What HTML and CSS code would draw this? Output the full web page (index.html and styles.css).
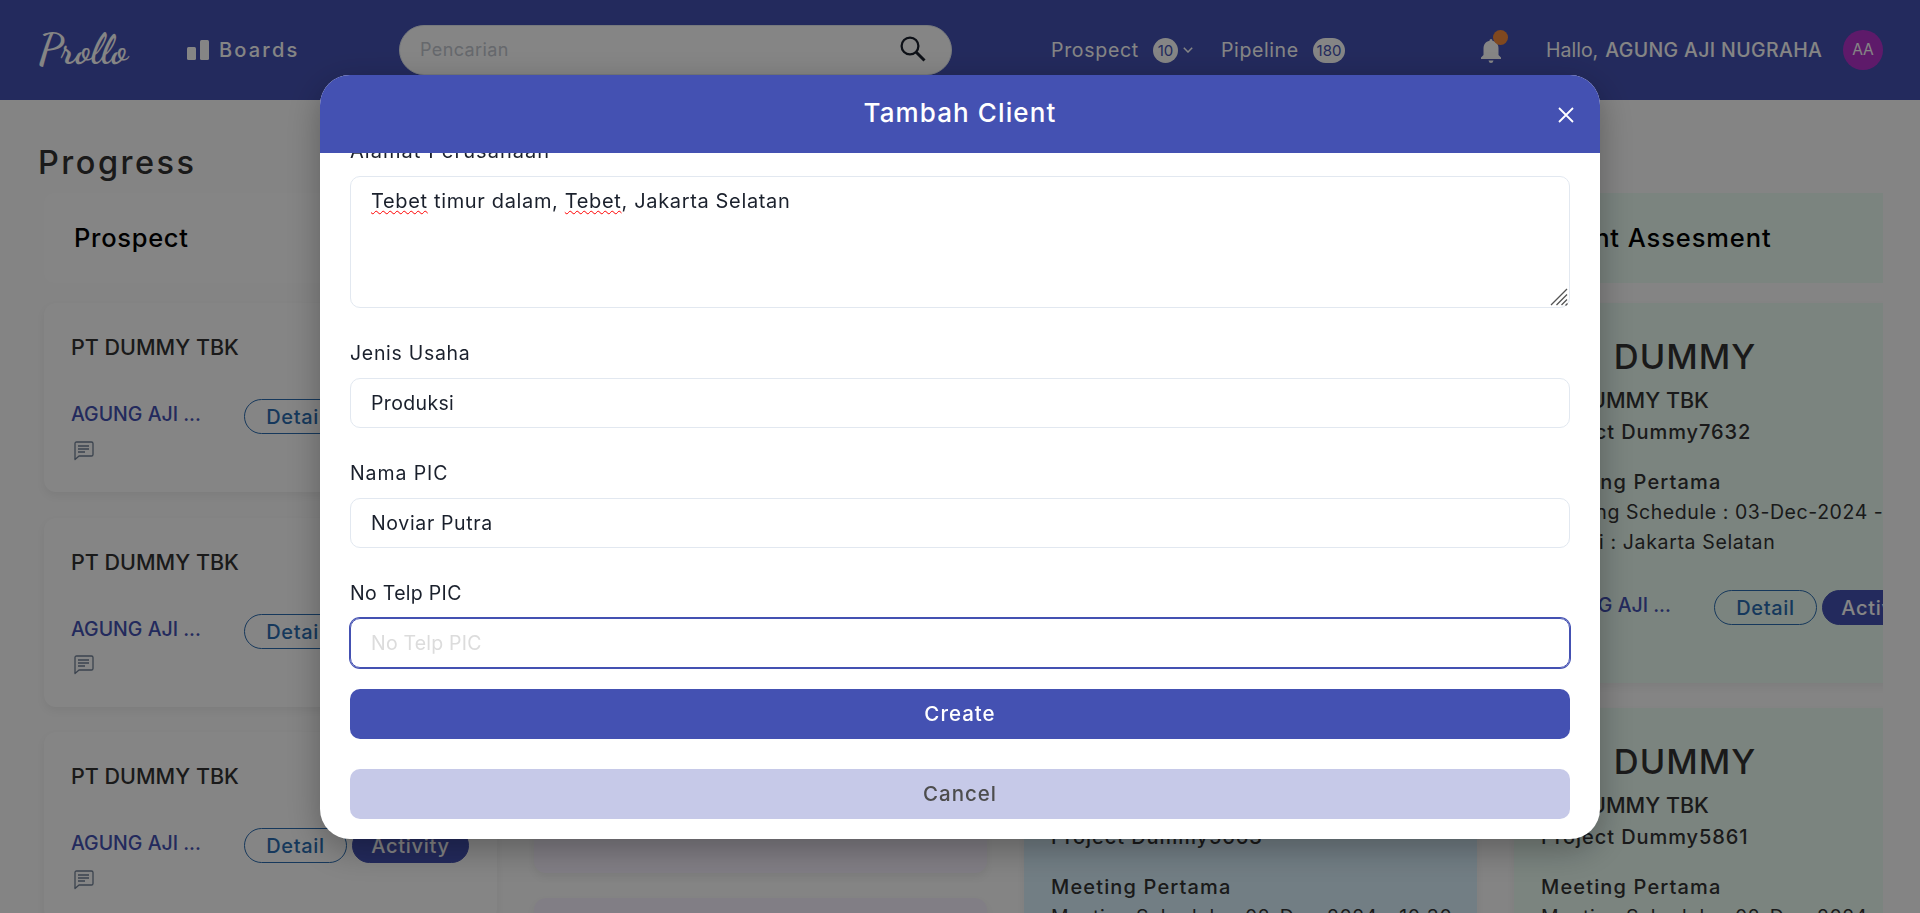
FILE: index.html
```html
<!DOCTYPE html>
<html lang="id">
<head>
<meta charset="utf-8">
<title>Prollo</title>
<link rel="stylesheet" href="styles.css">
</head>
<body>
<svg class="defs" aria-hidden="true">
  <symbol id="note" viewBox="0 0 20 20"><path d="M1 18.500V2.600Q1 1 2.600 1H17.400Q19 1 19 2.600V13.400Q19 15 17.400 15H5Z M4 5H15 M4 8H15 M4 11H11" fill="none" stroke="currentColor" stroke-width="1.300" stroke-linejoin="round"/></symbol>
</svg>
<div class="page">
  <header class="topbar">
    <div class="logo"><span>Prollo</span></div>
    <div class="boards">
      <svg width="22" height="20" viewBox="0 0 22 20"><rect y="7" width="9" height="13" rx="1.500" fill="#fff"/><rect x="13" width="9" height="20" rx="1.500" fill="#fff"/></svg>
      <span>Boards</span>
    </div>
    <div class="search"><span>Pencarian</span>
      <svg width="26" height="26" viewBox="0 0 26 26" fill="none" stroke="#1a202c" stroke-width="2.300"><circle cx="10" cy="10" r="8.400"/><path d="M16 16L24.500 24.500" stroke-width="3"/></svg>
    </div>
    <nav class="nav">
      <span class="nav-prospect">Prospect</span><b class="count ten">10</b>
      <svg class="chev" width="10" height="6" viewBox="0 0 10 6"><path d="M.8.8L5 5L9.200.8" fill="none" stroke="#fff" stroke-width="1.500"/></svg>
      <span class="nav-pipeline">Pipeline</span><b class="count">180</b>
    </nav>
    <div class="bell">
      <svg width="20" height="24" viewBox="0 0 20 24"><path d="M10 0Q11.500 0 11.500 1.800C15.500 2.600 17.500 5.500 17.500 9.500V16L20 18.600V20H0V18.600L2.500 16V9.500C2.500 5.500 4.500 2.600 8.500 1.800Q8.500 0 10 0ZM7.500 21.500H12.500Q12 24 10 24Q8 24 7.500 21.500Z" fill="#fff"/></svg>
      <i class="dot"></i>
    </div>
    <div class="hello"><span class="hi">Hallo,</span><span class="user">AGUNG AJI NUGRAHA</span></div>
    <div class="avatar">AA</div>
  </header>
  <h1 class="title"><span>Progress</span></h1>
  <main class="board">
    <section class="col">
      <h2 class="col-head">Prospect</h2>
      <article class="card">
        <h3 class="company">PT DUMMY TBK</h3>
        <div class="foot"><span class="owner">AGUNG AJI ...</span><span class="pill">Detail</span><span class="pill solid">Activity</span></div>
        <svg class="note"><use href="#note"/></svg>
      </article>
      <article class="card">
        <h3 class="company">PT DUMMY TBK</h3>
        <div class="foot"><span class="owner">AGUNG AJI ...</span><span class="pill">Detail</span><span class="pill solid">Activity</span></div>
        <svg class="note"><use href="#note"/></svg>
      </article>
      <article class="card">
        <h3 class="company">PT DUMMY TBK</h3>
        <div class="foot"><span class="owner">AGUNG AJI ...</span><span class="pill">Detail</span><span class="pill solid">Activity</span></div>
        <svg class="note"><use href="#note"/></svg>
      </article>
    </section>
    <section class="col purple">
      <h2 class="col-head"></h2>
      <article class="card first"></article>
      <article class="card"></article>
    </section>
    <section class="col blue">
      <h2 class="col-head"></h2>
      <article class="card long"></article>
      <article class="card tall">
        <h2 class="big">PT DUMMY</h2>
        <h3 class="company">PT DUMMY TBK</h3>
        <p class="project">Project Dummy5663</p>
        <p class="meeting">Meeting Pertama</p>
        <p class="line">Meeting Schedule : 02-Dec-2024 - 10:30</p>
      </article>
    </section>
    <section class="col green">
      <h2 class="col-head">Client Assesment</h2>
      <article class="card tall">
        <h2 class="big">PT DUMMY</h2>
        <h3 class="company">PT DUMMY TBK</h3>
        <p class="project">Project Dummy7632</p>
        <p class="meeting">Meeting Pertama</p>
        <p class="line">Meeting Schedule : 03-Dec-2024 - 10:30</p>
        <p class="line place">Lokasi : Jakarta Selatan</p>
        <div class="foot"><span class="owner">AGUNG AJI ...</span><span class="pill">Detail</span><span class="pill solid">Activity</span></div>
      </article>
      <article class="card tall">
        <h2 class="big">PT DUMMY</h2>
        <h3 class="company">PT DUMMY TBK</h3>
        <p class="project">Project Dummy5861</p>
        <p class="meeting">Meeting Pertama</p>
        <p class="line">Meeting Schedule : 02-Dec-2024 - 10:30</p>
      </article>
    </section>
  </main>
</div>
<div class="overlay">
  <div class="modal" role="dialog">
    <div class="modal-head"><span>Tambah Client</span>
      <svg class="close" width="16" height="16" viewBox="0 0 16 16"><path d="M1 1L15 15M15 1L1 15" stroke="#fff" stroke-width="1.800"/></svg>
    </div>
    <div class="modal-body">
      <label class="l1">Alamat Perusahaan</label>
      <div class="input area"><span class="v1"><u>Tebet</u> timur dalam, <u>Tebet</u>, Jakarta Selatan</span>
        <svg class="grip" width="18" height="18" viewBox="0 0 18 18"><path d="M1 17L17 1M6.500 17L17 6.500M11.500 17L17 11.500M15.500 17.500L17.500 15.500" stroke="#555" stroke-width="1.300"/></svg>
      </div>
      <label class="l2">Jenis Usaha</label>
      <div class="input"><span class="v2">Produksi</span></div>
      <label class="l3">Nama PIC</label>
      <div class="input"><span class="v3">Noviar Putra</span></div>
      <label class="l4">No Telp PIC</label>
      <div class="input focus"><span class="v4">No Telp PIC</span></div>
      <div class="btn create"><span>Create</span></div>
      <div class="btn cancel"><span>Cancel</span></div>
    </div>
  </div>
</div>
</body>
</html>
```
FILE: styles.css
```css
* { box-sizing: border-box; margin: 0; padding: 0; }
body { height: 913px; overflow: hidden; font-family: Inter, "Open Sans", sans-serif; font-size: 19.5px; line-height: 30px; color: #333; background: #fff; white-space: nowrap; }
h1, h2, h3 { font-weight: 500; }
.defs { display: block; width: 0; height: 0; }
.page { height: 913px; overflow: hidden; background: #fdfdfd; }

.topbar { display: flex; align-items: center; height: 100px; padding-left: 38px; background: #4451b2; color: #fff; }
.logo { width: 149px; font-family: "Dancing Script", "Liberation Serif", serif; font-weight: 700; font-size: 42px; }
.boards { display: flex; align-items: center; gap: 10px; width: 212px; font-weight: 500; font-size: 20px; letter-spacing: 2.2px; }
.search { display: flex; align-items: center; justify-content: space-between; width: 553px; height: 50px; padding: 0 25px 0 20px; border-radius: 25px; background: #fff; border: 1px solid #e2e8f0; color: #c3c8d0; font-size: 18px; letter-spacing: .4px; }
.search svg { margin-top: -2px; }
.nav { display: flex; align-items: center; width: 529px; padding-left: 99px; }
.nav-prospect { width: 102px; letter-spacing: .7px; }
.nav-pipeline { width: 92px; letter-spacing: .6px; }
.chev { margin: 0 28px 0 5px; }
.count { height: 25px; line-height: 25px; border-radius: 13px; background: #fff; color: #4451b2; font-size: 15px; font-weight: 400; width: 32px; text-align: center; }
.count.ten { width: 25px; }
.bell { position: relative; width: 65px; height: 24px; margin-top: 2px; }
.bell svg { display: block; }
.dot { position: absolute; left: 12px; top: -9px; width: 15px; height: 15px; border-radius: 50%; background: #f68b3c; }
.hello { display: flex; width: 297px; gap: 7px; }
.user { font-weight: 500; letter-spacing: .37px; }
.avatar { width: 40px; height: 40px; border-radius: 50%; background: #b532cc; font-size: 15.5px; line-height: 40px; text-align: center; }

.title { height: 93px; padding: 42px 0 0 38px; font-size: 32.5px; line-height: 42px; letter-spacing: 2.5px; color: #333; font-weight: 500; }
.board { display: flex; gap: 37.5px; width: 1845px; height: 720px; margin-left: 38px; padding-left: 6px; overflow: hidden; }
.col { flex: none; width: 452.5px; }
.col-head { height: 90px; margin-bottom: 20px; padding: 0 30px; border-radius: 10px; background: #fff; color: #000; font-size: 25.5px; line-height: 89px; letter-spacing: .7px; }
.green .col-head { letter-spacing: .9px; }
.card { height: 189px; margin-bottom: 25.500px; padding: 28px 27px 0; border-radius: 12px; background: #fff; box-shadow: 0 4px 8px rgba(0,0,0,.06); }
.card .company { height: 61px; padding-top: 1px; font-size: 21.5px; }
.foot { display: flex; align-items: center; margin-top: 7px; }
.owner { flex: none; width: 173px; color: #4451b2; font-weight: 500; margin-top: -5px; }
.pill { width: 103px; height: 35px; margin-right: 5px; border: 1px solid #2b6cb0; border-radius: 18px; color: #2b6cb0; font-weight: 500; font-size: 20px; line-height: 34px; letter-spacing: .7px; text-align: center; flex: none; }
.pill.solid { width: 117px; background: #4451b2; border-color: #4451b2; color: #fff; }
.note { display: block; width: 20px; height: 20px; margin: 6.500px 0 0 3px; color: #718096; }
.purple .col-head, .purple .card { background: #f8f2ff; }
.purple .first { height: 570px; margin-bottom: 25px; }
.blue .col-head, .blue .card { background: #dbf2fe; }
.green .col-head, .green .card { background: #ebfdf4; }
.card.tall { height: 380px; margin-bottom: 24.500px; border-radius: 10px; padding-top: 29px; }
.card.long { height: 380px; margin-bottom: 24.500px; }
.big { font-size: 34.5px; line-height: 50px; letter-spacing: 1px; word-spacing: 16px; }
.tall .company { height: 32px; padding-top: 3px; }
.project { font-weight: 500; font-size: 20px; margin-top: 3px; letter-spacing: .93px; }
.meeting { font-weight: 500; font-size: 20px; margin-top: 20px; letter-spacing: 1.15px; }
.line { letter-spacing: .57px; }
.tall .place { letter-spacing: .65px; }
.tall .foot { margin-top: 33px; }

.overlay { position: fixed; inset: 0; display: flex; align-items: flex-start; justify-content: center; padding-top: 75px; background: rgba(0,0,0,.48); }
.modal { width: 1280px; height: 764px; border-radius: 30px; overflow: hidden; background: #fff; color: #1a202c; box-shadow: 0 10px 35px rgba(0,0,0,.3); }
.modal-head { position: relative; height: 78px; background: #4451b2; color: #fff; font-size: 26px; font-weight: 500; line-height: 76px; letter-spacing: 1.1px; text-align: center; }
.close { position: absolute; right: 26px; top: 31.500px; }
.modal-body { display: flex; flex-direction: column; height: 686px; padding: 0 30px; overflow: hidden; }
.modal-body label { flex: none; height: 30px; margin-bottom: 10px; }
.modal-body .l1 { margin-top: -17px; font-size: 20px; letter-spacing: 1.05px; }
.l2 { letter-spacing: .7px; }
.l3 { letter-spacing: .9px; }
.l4 { letter-spacing: .3px; }
.input { display: flex; align-items: center; height: 50px; padding: 0 20px; margin-bottom: 30px; border: 1px solid #e2e8f0; border-radius: 10px; flex: none; }
.input.area { position: relative; align-items: flex-start; height: 132px; padding-top: 9px; }
.v1 { font-size: 20px; letter-spacing: .65px; }
.v2 { letter-spacing: .35px; }
.v3 { letter-spacing: .65px; }
.v4 { letter-spacing: .2px; }
.area u { text-decoration: underline wavy #f00 1px; text-underline-offset: 2px; text-decoration-skip-ink: none; }
.grip { position: absolute; right: 1px; bottom: 1px; }
.input.focus { border-color: #4451b2; box-shadow: 0 0 0 1px #4451b2; color: #dcdcdc; margin-bottom: 21px; }
.btn { height: 50px; flex: none; border-radius: 10px; text-align: center; line-height: 50px; font-weight: 500; font-size: 20.5px; letter-spacing: 1px; }
.create { background: #4451b2; color: #fff; margin-bottom: 30px; }
.cancel { background: #c6c9e8; color: #4d4d4d; }
```
